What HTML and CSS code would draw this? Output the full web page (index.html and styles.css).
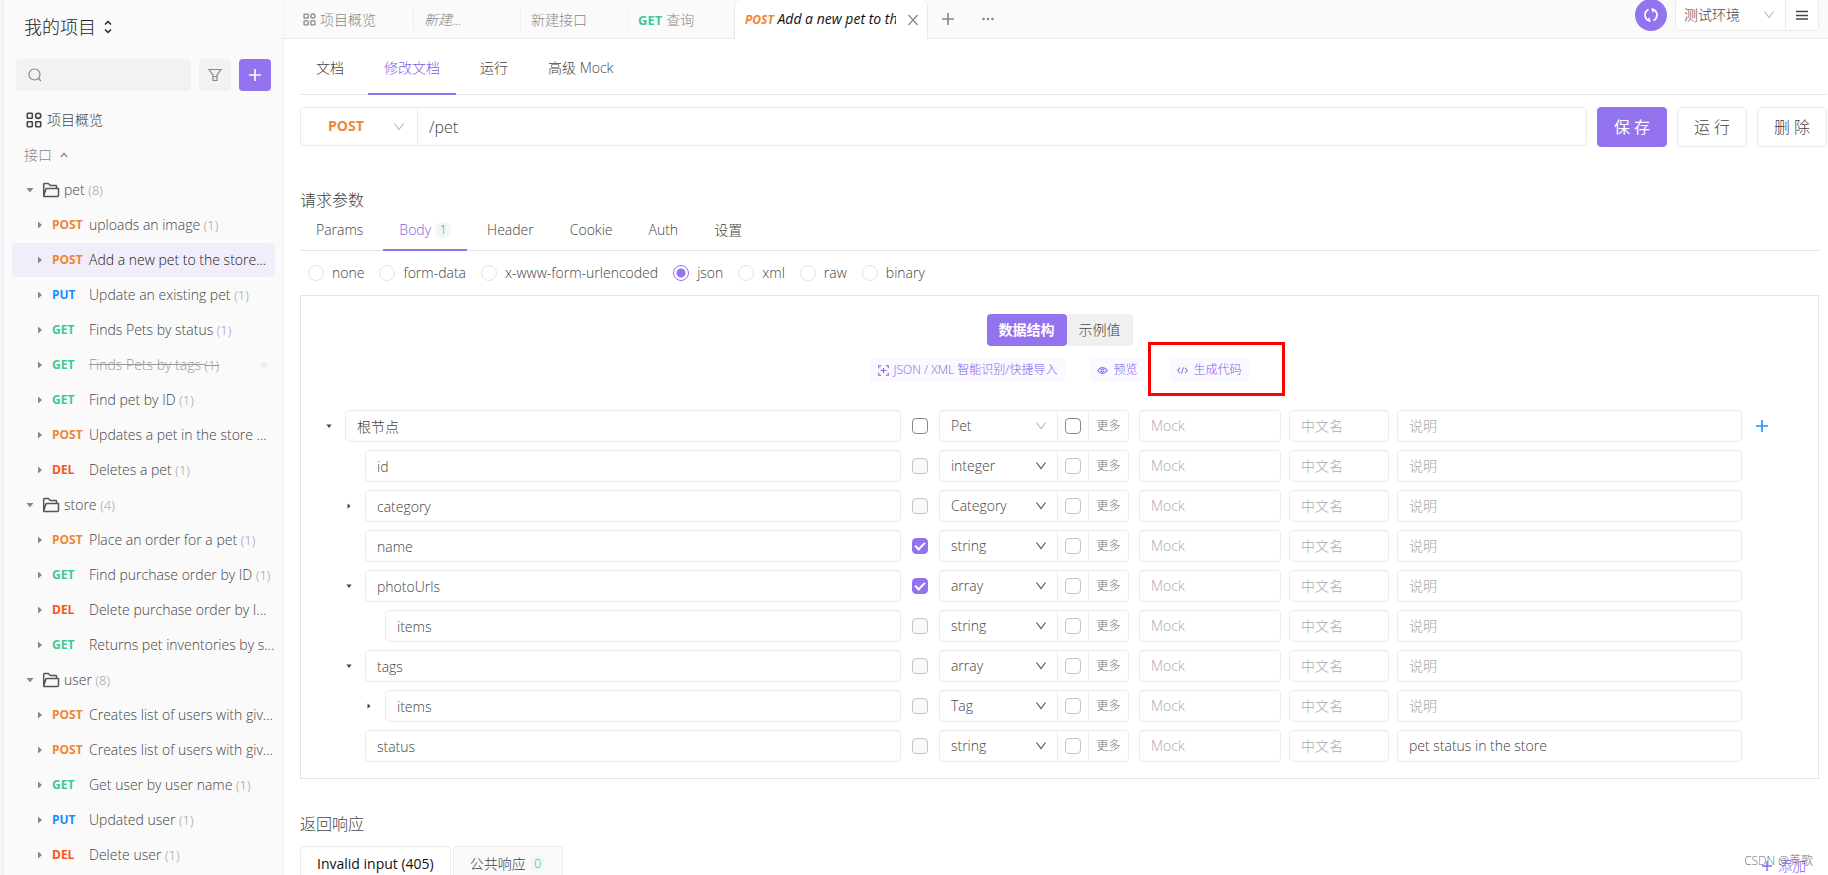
FILE: index.html
```html
<!DOCTYPE html>
<html lang="zh-CN">
<head>
<meta charset="utf-8">
<title>我的项目 - Add a new pet to the store</title>
<link rel="stylesheet" href="styles.css">
</head>
<body>
<svg class="sprite" aria-hidden="true">
  <symbol id="i-grid" viewBox="0 0 16 16"><g fill="none" stroke="currentColor" stroke-width="1.6"><rect x="1.3" y="1.3" width="5" height="5" rx=".6"/><circle cx="12.2" cy="3.8" r="2.6"/><rect x="1.3" y="9.7" width="5" height="5" rx=".6"/><rect x="9.7" y="9.7" width="5" height="5" rx=".6"/></g></symbol>
  <symbol id="i-down" viewBox="0 0 12 12"><path d="M1.5 2.5 6 8.500 10.500 2.500" fill="none" stroke="currentColor" stroke-width="1.2"/></symbol>
  <symbol id="i-plus" viewBox="0 0 12 12"><path d="M6 0V12M0 6H12" fill="none" stroke="currentColor" stroke-width="1.6"/></symbol>
  <symbol id="i-right" viewBox="0 0 8 8"><path d="M2 0.500 6 4 2 7.500Z" fill="currentColor"/></symbol>
  <symbol id="i-caret" viewBox="0 0 8 8"><path d="M.5 2H7.500L4 6.500Z" fill="currentColor"/></symbol>
  <symbol id="i-folder" viewBox="0 0 18 16"><path d="M1.700 14V2.200Q1.700 1.500 2.400 1.500H6.300L8.300 3.500H13.800Q14.500 3.500 14.500 4.200V6.200M1.700 14 3.800 7.200Q4 6.500 4.800 6.500H16.500V13.300Q16.500 14.500 15.300 14.500H2Z" fill="none" stroke="currentColor" stroke-width="1.5" stroke-linejoin="round"/></symbol>
</svg>
<div class="app">
  <aside class="sidebar">
    <button class="project" type="button">我的项目
      <svg class="i-sort" viewBox="0 0 8 14"><path d="M1 4.500 4 1.500 7 4.500M1 9.500 4 12.500 7 9.500" fill="none" stroke="currentColor" stroke-width="1.500"/></svg>
    </button>
    <div class="tools">
      <label class="search">
        <svg class="i14" viewBox="0 0 14 14"><g fill="none" stroke="currentColor" stroke-width="1.200"><circle cx="6.500" cy="6.500" r="5.500"/><path d="M10.500 10.500 13 13"/></g></svg>
        <input type="text" aria-label="搜索">
      </label>
      <button class="tool" type="button" aria-label="筛选"><svg class="i14" viewBox="0 0 14 14"><path d="M1 1.500H13L9 7V12.500H5V7ZM5 8.500H9" fill="none" stroke="currentColor" stroke-width="1.200"/></svg></button>
      <button class="tool tool-add" type="button" aria-label="新建"><svg class="i12"><use href="#i-plus"/></svg></button>
    </div>
    <a class="overview" href="#"><svg class="i16"><use href="#i-grid"/></svg>项目概览</a>
    <button class="group" type="button">接口 <svg class="i-up" viewBox="0 0 8 6"><path d="M.8 5 4 1.500 7.200 5" fill="none" stroke="currentColor" stroke-width="1.200"/></svg></button>
    <nav class="tree">
      <a class="folder" href="#"><svg class="i8"><use href="#i-caret"/></svg><svg class="i18"><use href="#i-folder"/></svg><span>pet <small>(8)</small></span></a>
      <a class="leaf" href="#"><svg class="i8"><use href="#i-right"/></svg><b class="post">POST</b><span>uploads an image <small>(1)</small></span></a>
      <a class="leaf active" href="#"><svg class="i8"><use href="#i-right"/></svg><b class="post">POST</b><span>Add a new pet to the store...</span></a>
      <a class="leaf" href="#"><svg class="i8"><use href="#i-right"/></svg><b class="put">PUT</b><span>Update an existing pet <small>(1)</small></span></a>
      <a class="leaf" href="#"><svg class="i8"><use href="#i-right"/></svg><b class="get">GET</b><span>Finds Pets by status <small>(1)</small></span></a>
      <a class="leaf deprecated" href="#"><svg class="i8"><use href="#i-right"/></svg><b class="get">GET</b><span>Finds Pets by tags <small>(1)</small></span><i class="dot"></i></a>
      <a class="leaf" href="#"><svg class="i8"><use href="#i-right"/></svg><b class="get">GET</b><span>Find pet by ID <small>(1)</small></span></a>
      <a class="leaf" href="#"><svg class="i8"><use href="#i-right"/></svg><b class="post">POST</b><span>Updates a pet in the store ...</span></a>
      <a class="leaf" href="#"><svg class="i8"><use href="#i-right"/></svg><b class="del">DEL</b><span>Deletes a pet <small>(1)</small></span></a>
      <a class="folder" href="#"><svg class="i8"><use href="#i-caret"/></svg><svg class="i18"><use href="#i-folder"/></svg><span>store <small>(4)</small></span></a>
      <a class="leaf" href="#"><svg class="i8"><use href="#i-right"/></svg><b class="post">POST</b><span>Place an order for a pet <small>(1)</small></span></a>
      <a class="leaf" href="#"><svg class="i8"><use href="#i-right"/></svg><b class="get">GET</b><span>Find purchase order by ID <small>(1)</small></span></a>
      <a class="leaf" href="#"><svg class="i8"><use href="#i-right"/></svg><b class="del">DEL</b><span>Delete purchase order by I...</span></a>
      <a class="leaf" href="#"><svg class="i8"><use href="#i-right"/></svg><b class="get">GET</b><span>Returns pet inventories by s...</span></a>
      <a class="folder" href="#"><svg class="i8"><use href="#i-caret"/></svg><svg class="i18"><use href="#i-folder"/></svg><span>user <small>(8)</small></span></a>
      <a class="leaf" href="#"><svg class="i8"><use href="#i-right"/></svg><b class="post">POST</b><span>Creates list of users with giv...</span></a>
      <a class="leaf" href="#"><svg class="i8"><use href="#i-right"/></svg><b class="post">POST</b><span>Creates list of users with giv...</span></a>
      <a class="leaf" href="#"><svg class="i8"><use href="#i-right"/></svg><b class="get">GET</b><span>Get user by user name <small>(1)</small></span></a>
      <a class="leaf" href="#"><svg class="i8"><use href="#i-right"/></svg><b class="put">PUT</b><span>Updated user <small>(1)</small></span></a>
      <a class="leaf" href="#"><svg class="i8"><use href="#i-right"/></svg><b class="del">DEL</b><span>Delete user <small>(1)</small></span></a>
    </nav>
  </aside>

  <main class="main">
    <header class="topbar">
      <div class="tabs">
        <a class="tab tab-first" href="#"><svg class="i13"><use href="#i-grid"/></svg>项目概览</a>
        <a class="tab italic" href="#">新建...</a>
        <a class="tab" href="#">新建接口</a>
        <a class="tab" href="#"><b class="get">GET</b> 查询</a>
        <div class="tab tab-open">
          <a class="italic" href="#"><b class="post">POST</b> <span>Add a new pet to the store</span></a>
          <button type="button" aria-label="关闭"><svg class="i12" viewBox="0 0 12 12"><path d="M1.500 1 10.500 11M10.500 1 1.500 11" fill="none" stroke="currentColor" stroke-width="1.300"/></svg></button>
        </div>
        <button class="tab-btn" type="button" aria-label="新建标签"><svg class="i12"><use href="#i-plus"/></svg></button>
        <button class="tab-btn" type="button" aria-label="更多标签"><svg class="i12" viewBox="0 0 12 12"><g fill="currentColor"><circle cx="1.500" cy="6" r="1.300"/><circle cx="6" cy="6" r="1.300"/><circle cx="10.500" cy="6" r="1.300"/></g></svg></button>
      </div>
      <div class="env">
        <button class="sync" type="button" aria-label="同步"><svg class="i16" viewBox="0 0 16 16"><g fill="none" stroke="currentColor" stroke-width="1.700"><path d="M6.600 13.800A6 6 0 0 1 3.600 3.900L5.500 2.400M9.400 2.200A6 6 0 0 1 12.400 12.100L10.500 13.600"/><path d="M3.600 12.300 6.800 14 5.800 10.800M12.400 3.700 9.200 2 10.200 5.200" stroke-width="1.300"/></g></svg></button>
        <div class="env-box">
          <div class="pick"><select aria-label="环境"><option>测试环境</option></select><svg class="i12"><use href="#i-down"/></svg></div>
          <button type="button" aria-label="菜单"><svg class="i12" viewBox="0 0 12 12"><path d="M0 2.500H12M0 6.500H12M0 10H12" stroke="currentColor" stroke-width="1.500"/></svg></button>
        </div>
      </div>
    </header>

    <div class="content">
      <nav class="subtabs">
        <a href="#">文档</a><a class="on" href="#">修改文档</a><a href="#">运行</a><a href="#">高级 Mock</a>
      </nav>
      <div class="request">
        <div class="url">
          <div class="pick method"><select aria-label="请求方法"><option>POST</option></select><svg class="i12"><use href="#i-down"/></svg></div>
          <input type="text" value="/pet" aria-label="路径">
        </div>
        <button class="btn primary" type="button">保 存</button>
        <button class="btn" type="button">运 行</button>
        <button class="btn" type="button">删 除</button>
      </div>

      <div class="body">
        <h2>请求参数</h2>
        <nav class="params">
          <a href="#">Params</a><a class="on" href="#">Body<span class="badge">1</span></a><a href="#">Header</a><a href="#">Cookie</a><a href="#">Auth</a><a href="#">设置</a>
        </nav>
        <div class="types">
          <label><input type="radio" name="t">none</label>
          <label><input type="radio" name="t">form-data</label>
          <label><input type="radio" name="t">x-www-form-urlencoded</label>
          <label><input type="radio" name="t" checked>json</label>
          <label><input type="radio" name="t">xml</label>
          <label><input type="radio" name="t">raw</label>
          <label><input type="radio" name="t">binary</label>
        </div>

        <section class="schema">
          <div class="segment"><button class="on" type="button">数据结构</button><button type="button">示例值</button></div>
          <div class="links">
            <button type="button"><svg class="i11" viewBox="0 0 12 12"><g fill="none" stroke="currentColor" stroke-width="1.200"><path d="M.8 3.500V.8H3.500M8.500 .8H11.200V3.500M11.200 8.500V11.200H8.500M3.500 11.200H.8V8.500"/><path d="M6 3.200V8.800M3 6H9"/></g></svg>JSON / XML 智能识别/快捷导入</button>
            <button type="button"><svg class="i11" viewBox="0 0 12 12"><g fill="none" stroke="currentColor" stroke-width="1.100"><path d="M.6 6Q6 -.8 11.400 6Q6 12.800 .6 6Z"/><circle cx="6" cy="6" r="1.700"/></g></svg>预览</button>
            <div class="marked"><button type="button"><svg class="i11" viewBox="0 0 12 12"><path d="M3.300 3 .7 6 3.300 9M8.700 3 11.300 6 8.700 9M7 2.500 5 9.500" fill="none" stroke="currentColor" stroke-width="1.100"/></svg>生成代码</button></div>
          </div>
          <div class="rows">
            <div class="row root"><div class="name"><svg class="i8"><use href="#i-caret"/></svg><input type="text" value="根节点" aria-label="名称"></div><input class="check" type="checkbox" aria-label="必需"><div class="type"><div class="pick"><select aria-label="类型"><option>Pet</option></select><svg class="i12"><use href="#i-down"/></svg></div><span class="null"><input type="checkbox" aria-label="可空"></span><button type="button">更多</button></div><input type="text" placeholder="Mock" aria-label="Mock"><input type="text" placeholder="中文名" aria-label="中文名"><input type="text" placeholder="说明" aria-label="说明"><button class="add" type="button" aria-label="添加字段"><svg class="i12"><use href="#i-plus"/></svg></button></div>
            <div class="row"><div class="name l1"><input type="text" value="id" aria-label="名称"></div><input class="check" type="checkbox" aria-label="必需"><div class="type"><div class="pick"><select aria-label="类型"><option>integer</option></select><svg class="i12"><use href="#i-down"/></svg></div><span class="null"><input type="checkbox" aria-label="可空"></span><button type="button">更多</button></div><input type="text" placeholder="Mock" aria-label="Mock"><input type="text" placeholder="中文名" aria-label="中文名"><input type="text" placeholder="说明" aria-label="说明"></div>
            <div class="row"><div class="name l1"><svg class="i8"><use href="#i-right"/></svg><input type="text" value="category" aria-label="名称"></div><input class="check" type="checkbox" aria-label="必需"><div class="type"><div class="pick"><select aria-label="类型"><option>Category</option></select><svg class="i12"><use href="#i-down"/></svg></div><span class="null"><input type="checkbox" aria-label="可空"></span><button type="button">更多</button></div><input type="text" placeholder="Mock" aria-label="Mock"><input type="text" placeholder="中文名" aria-label="中文名"><input type="text" placeholder="说明" aria-label="说明"></div>
            <div class="row"><div class="name l1"><input type="text" value="name" aria-label="名称"></div><input class="check" type="checkbox" checked aria-label="必需"><div class="type"><div class="pick"><select aria-label="类型"><option>string</option></select><svg class="i12"><use href="#i-down"/></svg></div><span class="null"><input type="checkbox" aria-label="可空"></span><button type="button">更多</button></div><input type="text" placeholder="Mock" aria-label="Mock"><input type="text" placeholder="中文名" aria-label="中文名"><input type="text" placeholder="说明" aria-label="说明"></div>
            <div class="row"><div class="name l1"><svg class="i8"><use href="#i-caret"/></svg><input type="text" value="photoUrls" aria-label="名称"></div><input class="check" type="checkbox" checked aria-label="必需"><div class="type"><div class="pick"><select aria-label="类型"><option>array</option></select><svg class="i12"><use href="#i-down"/></svg></div><span class="null"><input type="checkbox" aria-label="可空"></span><button type="button">更多</button></div><input type="text" placeholder="Mock" aria-label="Mock"><input type="text" placeholder="中文名" aria-label="中文名"><input type="text" placeholder="说明" aria-label="说明"></div>
            <div class="row"><div class="name l2"><input type="text" value="items" aria-label="名称"></div><input class="check" type="checkbox" aria-label="必需"><div class="type"><div class="pick"><select aria-label="类型"><option>string</option></select><svg class="i12"><use href="#i-down"/></svg></div><span class="null"><input type="checkbox" aria-label="可空"></span><button type="button">更多</button></div><input type="text" placeholder="Mock" aria-label="Mock"><input type="text" placeholder="中文名" aria-label="中文名"><input type="text" placeholder="说明" aria-label="说明"></div>
            <div class="row"><div class="name l1"><svg class="i8"><use href="#i-caret"/></svg><input type="text" value="tags" aria-label="名称"></div><input class="check" type="checkbox" aria-label="必需"><div class="type"><div class="pick"><select aria-label="类型"><option>array</option></select><svg class="i12"><use href="#i-down"/></svg></div><span class="null"><input type="checkbox" aria-label="可空"></span><button type="button">更多</button></div><input type="text" placeholder="Mock" aria-label="Mock"><input type="text" placeholder="中文名" aria-label="中文名"><input type="text" placeholder="说明" aria-label="说明"></div>
            <div class="row"><div class="name l2"><svg class="i8"><use href="#i-right"/></svg><input type="text" value="items" aria-label="名称"></div><input class="check" type="checkbox" aria-label="必需"><div class="type"><div class="pick"><select aria-label="类型"><option>Tag</option></select><svg class="i12"><use href="#i-down"/></svg></div><span class="null"><input type="checkbox" aria-label="可空"></span><button type="button">更多</button></div><input type="text" placeholder="Mock" aria-label="Mock"><input type="text" placeholder="中文名" aria-label="中文名"><input type="text" placeholder="说明" aria-label="说明"></div>
            <div class="row"><div class="name l1"><input type="text" value="status" aria-label="名称"></div><input class="check" type="checkbox" aria-label="必需"><div class="type"><div class="pick"><select aria-label="类型"><option>string</option></select><svg class="i12"><use href="#i-down"/></svg></div><span class="null"><input type="checkbox" aria-label="可空"></span><button type="button">更多</button></div><input type="text" placeholder="Mock" aria-label="Mock"><input type="text" placeholder="中文名" aria-label="中文名"><input type="text" value="pet status in the store" aria-label="说明"></div>
          </div>
        </section>

        <h2 class="resp-title">返回响应</h2>
        <div class="resp">
          <a class="card on" href="#">Invalid input (405)</a>
          <a class="card" href="#">公共响应<span class="badge">0</span></a>
          <button class="resp-add" type="button"><svg class="i10"><use href="#i-plus"/></svg>添加</button>
        </div>
      </div>
    </div>
  </main>
</div>
<div class="watermark">CSDN @养歌</div>
</body>
</html>
```

FILE: styles.css
```css
*, ::after { box-sizing: border-box; }
html, body { height: 100%; }
body {
  margin: 0;
  overflow: hidden;
  background: #fff;
  color: #444;
  font: 300 14px/20px "Open Sans", "Noto Sans CJK SC", sans-serif;
}
a { color: inherit; text-decoration: none; }
b { font-weight: 700; }
button, input, select { font: inherit; color: inherit; margin: 0; }
button { border: 0; padding: 0; background: none; white-space: nowrap; cursor: pointer; }
svg { flex: none; display: block; }
.sprite { position: absolute; width: 0; height: 0; }
.i8 { width: 8px; height: 8px; }
.i10 { width: 10px; height: 10px; }
.i11 { width: 11px; height: 11px; }
.i12 { width: 12px; height: 12px; }
.i13 { width: 13px; height: 13px; }
.i14 { width: 14px; height: 14px; }
.i16 { width: 16px; height: 16px; }
.i18 { width: 18px; height: 16px; }
.post { color: #ef8636; }
.get { color: #3ec896; }
.put { color: #1a8cff; }
.del { color: #fa541c; }

.app { display: flex; height: 100%; }

/* sidebar */
.sidebar {
  flex: none;
  width: 284px;
  border-left: 3px solid #f3f4f8;
  border-right: 1px solid #efeff3;
  background: #fafafa;
  box-shadow: inset 1px 0 #ebebf0;
  overflow: hidden;
}
.project { display: flex; align-items: center; gap: 8px; margin: 15px 0 20px 21px; font-size: 18px; line-height: 24px; color: #222; }
.i-sort { width: 8px; height: 14px; }
.tools { display: flex; gap: 8px; padding: 0 12px 0 13px; }
.search { display: flex; flex: 1; align-items: center; gap: 8px; min-width: 0; padding: 0 12px; border-radius: 4px; background: #f2f2f2; color: #888; }
.search input { flex: 1; min-width: 0; border: 0; background: none; outline: 0; }
.tool { display: grid; place-items: center; width: 32px; height: 32px; border-radius: 4px; background: #f2f2f2; color: #888; }
.tool-add { background: #9373ee; color: #fff; }
.overview { display: flex; align-items: center; gap: 5px; margin: 19px 0 0 23px; }
.group { display: flex; align-items: center; gap: 8px; margin: 15px 0 0 21px; color: #888; }
.i-up { width: 8px; height: 6px; }
.tree { display: grid; grid-template-columns: minmax(0, 1fr); gap: 1px; margin-top: 8px; padding: 0 8px 0 9px; }
.tree a { display: flex; align-items: center; height: 34px; border-radius: 4px; white-space: nowrap; }
.tree small { font-size: 13px; color: #999; }
.tree .i8 { color: #888; }
.folder { padding-left: 14px; gap: 4px; }
.folder .i18 { margin-left: 4px; color: #555; }
.leaf { padding-left: 24px; }
.leaf b { flex: none; width: 37px; margin-left: 8px; font-size: 12px; }
.leaf.active { background: #f1eef9; color: #222; }
.deprecated span { text-decoration: line-through; color: #999; }
.dot { width: 6px; height: 6px; margin: 0 8px 0 auto; border-radius: 50%; background: #eee; }

/* top bar */
.main { flex: 1; min-width: 0; }
.topbar { display: flex; justify-content: space-between; height: 39px; border-bottom: 1px solid #e8e8f0; background: #fafafa; }
.tabs { display: flex; padding-left: 9px; }
.tab { display: flex; align-items: center; gap: 4px; width: 107px; height: 39px; padding-left: 10px; white-space: nowrap; color: #888; background: linear-gradient(#f0f0f0, #f0f0f0) right 7px / 1px 24px no-repeat; }
.tab-first { width: 121px; }
.tab b { font-size: 13px; }
.italic { font-style: italic; }
.tab-open { width: 194px; gap: 11px; margin-left: -1px; border: 1px solid #e8e8f0; border-top: 0; border-bottom: 0; border-radius: 6px 6px 0 0; background: #fff; color: #111; }
.tab-open a { width: 151px; overflow: hidden; font-weight: 400; }
.tab-open b { font-size: 12px; font-weight: 700; }
.tab-open button { color: #888; }
.tab-btn { display: grid; place-items: center; width: 40px; height: 38px; color: #888; }
.env { display: flex; gap: 8px; padding-right: 9px; }
.sync { display: grid; place-items: center; width: 32px; height: 32px; margin-top: -1px; border-radius: 50%; background: #9373ee; color: #fff; }
.pick { display: grid; align-items: center; min-width: 0; }
.pick > * { grid-area: 1 / 1; }
.pick select { width: 100%; height: 100%; padding: 0 28px 0 8px; border: 0; outline: 0; appearance: none; background: none; }
.pick svg { justify-self: end; margin-right: 10px; color: #bbb; pointer-events: none; }
.env-box { display: flex; width: 144px; height: 32px; margin-top: -1px; border: 1px solid #ebebeb; border-radius: 4px; background: #fff; }
.env-box .pick { flex: 1; border-right: 1px solid #ebebeb; }
.env-box button { display: grid; place-items: center; width: 32px; }

/* content */
.content { padding-left: 16px; }
.subtabs { display: flex; gap: 8px; margin-right: 1px; border-bottom: 1px solid #e4e4e6; }
.subtabs a { padding: 19px 16px 15px; margin-bottom: -1px; border-bottom: 2px solid transparent; }
.subtabs .on, .params .on { border-color: #9373ee; color: #8360ea; }
.request { display: flex; gap: 10px; margin: 12px 1px 0 0; }
.url { display: flex; flex: 1; height: 39px; border: 1px solid #ebebeb; border-radius: 4px; }
.url input { flex: 1; min-width: 0; padding: 0 11px; border: 0; outline: 0; background: none; font-size: 16px; }
.method { width: 117px; border-right: 1px solid #ebebeb; }
.method select { padding: 0 28px 2px 27px; font-weight: 700; color: #ef8636; }
.method svg { margin-right: 12px; }
.btn { width: 70px; height: 40px; border: 1px solid #ebebeb; border-radius: 4px; background: #fff; font-size: 16px; }
.btn.primary { border-color: #9373ee; background: #9373ee; color: #fff; font-weight: 400; }
.body { margin-right: 9px; }
h2 { margin: 41px 0 0; font-size: 16px; line-height: 24px; font-weight: 300; }
.params { display: flex; gap: 4px; border-bottom: 1px solid #e4e4e6; }
.params a { display: flex; align-items: center; height: 39px; padding: 0 16px 1px; margin-bottom: -1px; border-bottom: 2px solid transparent; }
.badge { display: inline-block; width: 16px; margin-left: 4px; border-radius: 8px; background: #f5f5f5; color: #22b880; font-size: 12px; line-height: 16px; text-align: center; }
.types { display: flex; gap: 15px; padding: 12px 8px; }
.types label { display: flex; align-items: center; gap: 8px; }
.types input { appearance: none; width: 16px; height: 16px; border: 1px solid #e3e3e3; border-radius: 50%; background: #fff; }
.types input:checked { border-color: #9373ee; background: radial-gradient(circle, #9373ee 4px, #fff 5px); }

/* schema editor */
.schema { border: 1px solid #e4e4e6; padding: 18px 16px 16px; }
.segment, .links { display: flex; justify-content: center; }
.segment button { height: 32px; padding: 0 12px; background: #f0f0f0; border-radius: 0 4px 4px 0; }
.segment .on { border-radius: 4px; background: #9373ee; color: #fff; font-weight: 700; }
.links { gap: 24px; margin-top: 12px; }
.links button { display: flex; align-items: center; gap: 5px; height: 24px; padding: 0 8px; border-radius: 4px; background: #faf9ff; color: #8360ea; font-size: 12px; }
.marked { position: relative; }
.marked::after { content: ""; position: absolute; top: -16px; left: -21px; width: 137px; height: 54px; border: 3px solid #f00; pointer-events: none; }
.rows { display: grid; gap: 8px; margin-top: 28px; padding-right: 28px; }
.row { display: grid; grid-template-columns: minmax(0, 22fr) 22px 192px 142px 100px minmax(0, 13fr) 24px; gap: 8px; height: 32px; }
.row input[type="text"] { width: 100%; min-width: 0; padding: 0 11px; border: 1px solid #ebebeb; border-radius: 4px; outline: 0; background: #fff; }
.row input::placeholder { color: #aaa; opacity: 1; }
.name { display: grid; grid-template-columns: 8px minmax(0, 1fr); gap: 12px; align-items: center; padding-left: 8px; }
.name .i8 { width: 6px; height: 6px; justify-self: center; }
.name input { grid-column: 2; height: 32px; }
.l1 { padding-left: 28px; }
.l2 { padding-left: 48px; }
.row input[type="checkbox"] { appearance: none; width: 16px; height: 16px; border: 1px solid #c4c4c4; border-radius: 4px; background: #fafafa; }
.row .check { place-self: center; }
.null input[type="checkbox"] { background: #fff; }
.root input[type="checkbox"] { border-color: #888; background: #fff; }
.row .check:checked { border-color: #9373ee; background: #9373ee; display: grid; place-items: center; }
.row .check:checked::after { content: ""; width: 10px; height: 6px; margin-bottom: 3px; border: solid #fff; border-width: 0 0 2px 2px; transform: rotate(-45deg); }
.type { display: flex; width: 190px; border: 1px solid #ebebeb; border-radius: 4px; }
.type .pick { flex: 1; }
.type .pick select { padding-left: 11px; }
.type .pick svg { color: #555; }
.root .type .pick svg { color: #bbb; }
.null { display: grid; place-items: center; width: 32px; border: solid #ebebeb; border-width: 0 1px; }
.type button { width: 39px; font-size: 12px; color: #777; }
.add { display: grid; place-items: center; color: #1890ff; }

/* responses */
.resp-title { margin-top: 33px; }
.resp { display: flex; gap: 2px; margin-top: 10px; }
.card { display: flex; align-items: center; height: 40px; padding: 0 16px 4px; border: 1px solid #ececee; border-radius: 4px 4px 0 0; background: #fafafa; }
.card.on { background: #fff; color: #111; font-weight: 400; }
.resp-add { display: flex; align-items: center; gap: 6px; margin-left: auto; padding-right: 13px; color: #8360ea; }
.watermark { position: absolute; right: 15px; bottom: 4px; font-size: 12px; color: rgba(70, 70, 70, .8); pointer-events: none; }
```
